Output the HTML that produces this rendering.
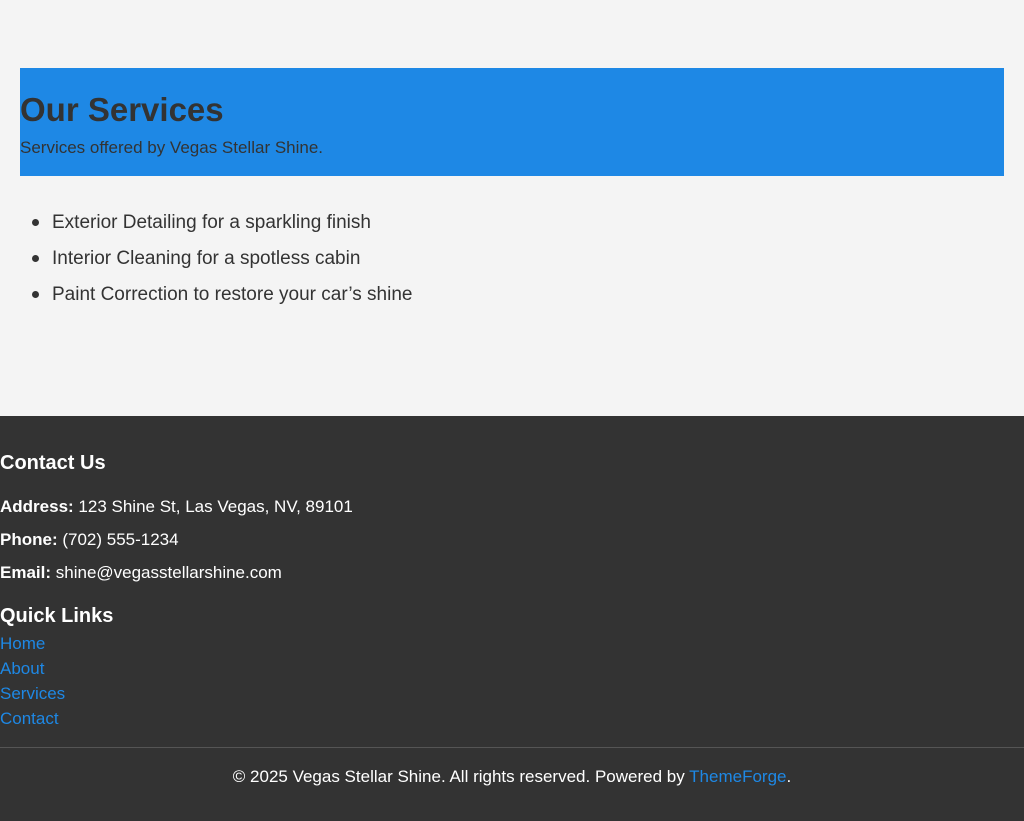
<!DOCTYPE html>
<html><head><meta charset="utf-8"><style>
*{margin:0;padding:0;box-sizing:border-box}
html,body{width:1024px;height:821px;overflow:hidden;background:#f4f4f4;font-family:"Liberation Sans",Arial,sans-serif;color:#333}
.a{position:absolute;white-space:nowrap}
#hero{position:absolute;left:20px;top:68px;width:984px;height:108px;background:#1e88e5}
#foot{position:absolute;left:0;top:416px;width:1024px;height:405px;background:#333;color:#fff}
.bul{position:absolute;left:32px;width:7px;height:7px;border-radius:50%;background:#333}
a{color:#1e88e5;text-decoration:none}
</style></head><body>
<div id="hero"></div>
<div class="a" style="left:20px;top:91px;font-size:33px;font-weight:bold;color:#333">Our Services</div>
<div class="a" style="left:20px;top:138px;font-size:17px;color:#333">Services offered by Vegas Stellar Shine.</div>

<div class="bul" style="top:219px"></div>
<div class="a" style="left:52px;top:212px;font-size:19px">Exterior Detailing for a sparkling finish</div>
<div class="bul" style="top:255px"></div>
<div class="a" style="left:52px;top:248px;font-size:19px">Interior Cleaning for a spotless cabin</div>
<div class="bul" style="top:291px"></div>
<div class="a" style="left:52px;top:284px;font-size:19px">Paint Correction to restore your car’s shine</div>

<div id="foot">
<div class="a" style="left:0;top:36px;font-size:20px;font-weight:bold">Contact Us</div>
<div class="a" style="left:0;top:81px;font-size:17px"><b>Address:</b> 123 Shine St, Las Vegas, NV, 89101</div>
<div class="a" style="left:0;top:114px;font-size:17px"><b>Phone:</b> (702) 555-1234</div>
<div class="a" style="left:0;top:147px;font-size:17px"><b>Email:</b> shine@vegasstellarshine.com</div>
<div class="a" style="left:0;top:189px;font-size:20px;font-weight:bold">Quick Links</div>
<div class="a" style="left:0;top:218px;font-size:17px"><a>Home</a></div>
<div class="a" style="left:0;top:243px;font-size:17px"><a>About</a></div>
<div class="a" style="left:0;top:268px;font-size:17px"><a>Services</a></div>
<div class="a" style="left:0;top:293px;font-size:17px"><a>Contact</a></div>
<div style="position:absolute;left:0;top:331px;width:1024px;height:1px;background:#555"></div>
<div class="a" style="left:0;width:1024px;text-align:center;top:351px;font-size:17px">© 2025 Vegas Stellar Shine. All rights reserved. Powered by <a>ThemeForge</a>.</div>
</div>
</body></html>
